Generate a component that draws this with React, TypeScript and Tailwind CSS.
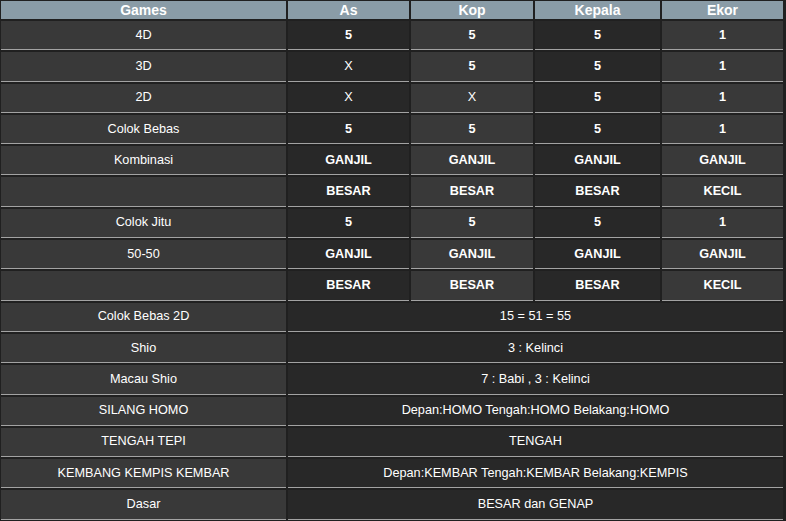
const head = ['Games', 'As', 'Kop', 'Kepala', 'Ekor'];

const rows: [string, string[]][] = [
  ['4D', ['5', '5', '5', '1']],
  ['3D', ['X', '5', '5', '1']],
  ['2D', ['X', 'X', '5', '1']],
  ['Colok Bebas', ['5', '5', '5', '1']],
  ['Kombinasi', ['GANJIL', 'GANJIL', 'GANJIL', 'GANJIL']],
  ['', ['BESAR', 'BESAR', 'BESAR', 'KECIL']],
  ['Colok Jitu', ['5', '5', '5', '1']],
  ['50-50', ['GANJIL', 'GANJIL', 'GANJIL', 'GANJIL']],
  ['', ['BESAR', 'BESAR', 'BESAR', 'KECIL']],
];

const wide: [string, string][] = [
  ['Colok Bebas 2D', '15 = 51 = 55'],
  ['Shio', '3 : Kelinci'],
  ['Macau Shio', '7 : Babi , 3 : Kelinci'],
  ['SILANG HOMO', 'Depan:HOMO Tengah:HOMO Belakang:HOMO'],
  ['TENGAH TEPI', 'TENGAH'],
  ['KEMBANG KEMPIS KEMBAR', 'Depan:KEMBAR Tengah:KEMBAR Belakang:KEMPIS'],
  ['Dasar', 'BESAR dan GENAP'],
];

const cell = 'flex items-center justify-center border-b border-[#a3a3a3]';

export default function App() {
  return (
    <div className="min-h-screen bg-[#202020] pl-[1px] pt-[1px] text-[12.7px] text-white font-['Liberation_Sans',Arial,sans-serif]">
      <div className="grid grid-cols-[285px_121px_122px_125px_121px] grid-rows-[18px] auto-rows-[29.3px] gap-[2px]">
        {head.map((h) => (
          <div key={h} className="flex items-center justify-center bg-[#8a9ca7] font-bold text-[14px]">
            {h}
          </div>
        ))}

        {rows.map(([game, vals], i) => (
          <div key={i} className="contents">
            <div className={`${cell} bg-[#393939]`}>{game}</div>
            {vals.map((v, j) => (
              <div
                key={j}
                className={`${cell} ${v === 'X' ? 'font-normal' : 'font-bold'} ${j % 2 === 0 ? 'bg-[#282828]' : 'bg-[#393939]'}`}
              >
                {v}
              </div>
            ))}
          </div>
        ))}

        {wide.map(([game, val]) => (
          <div key={game} className="contents">
            <div className={`${cell} bg-[#393939]`}>{game}</div>
            <div className={`${cell} col-span-4 bg-[#282828]`}>{val}</div>
          </div>
        ))}
      </div>
    </div>
  );
}
